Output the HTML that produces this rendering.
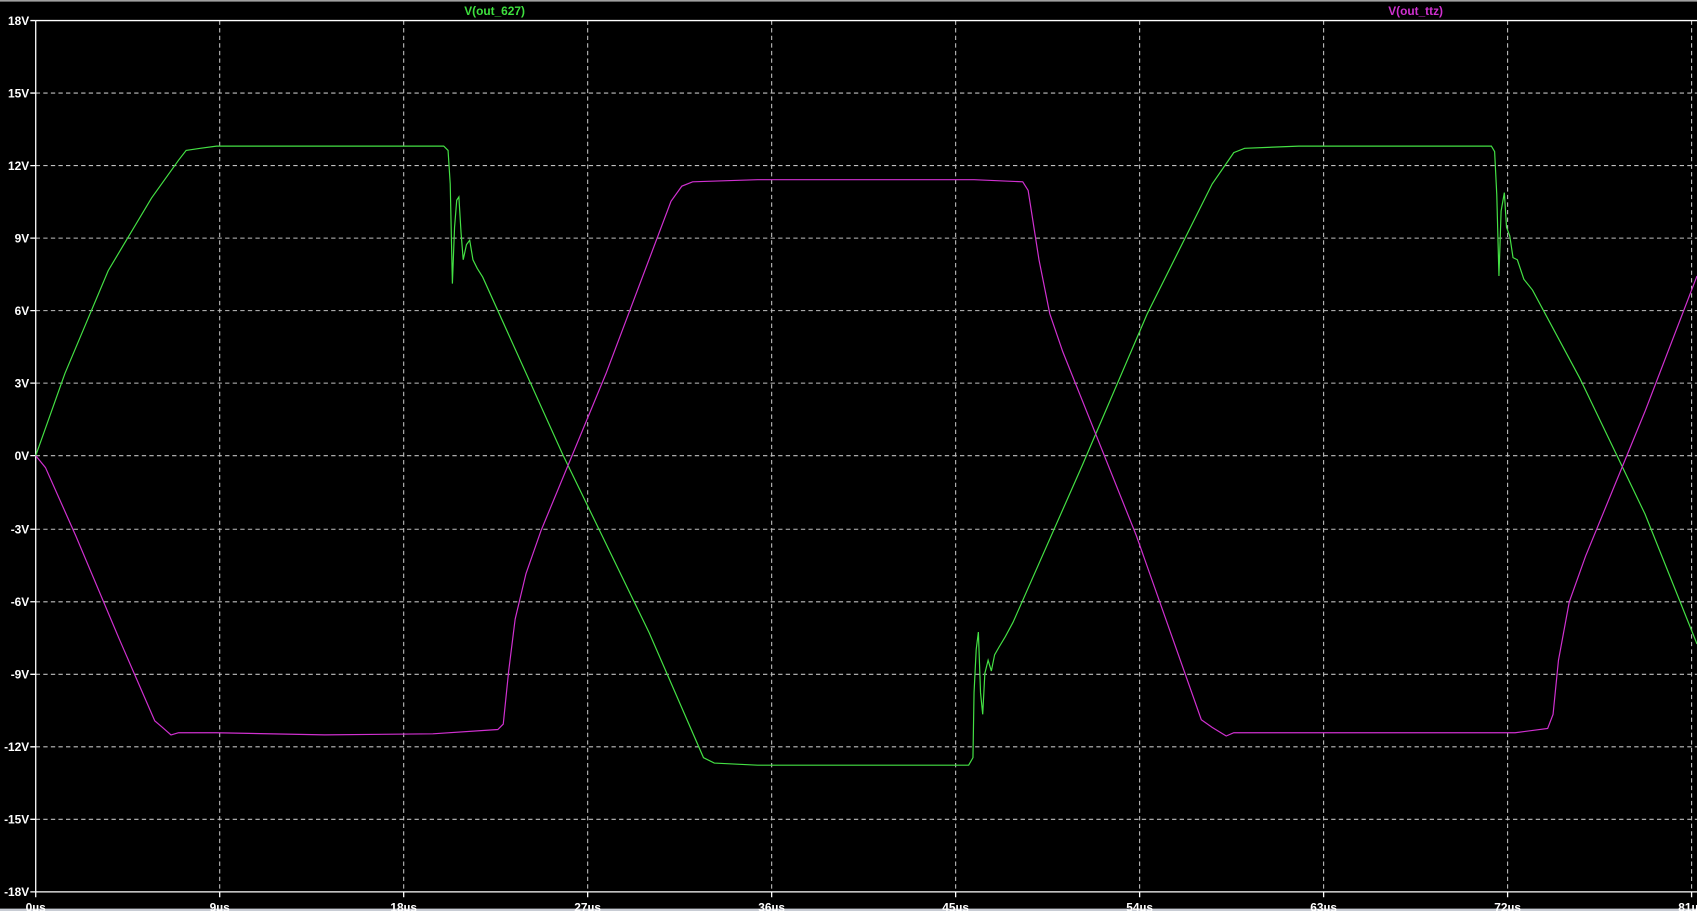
<!DOCTYPE html>
<html><head><meta charset="utf-8"><style>
html,body{margin:0;padding:0;background:#000;overflow:hidden}
svg{display:block}
text{font-family:"Liberation Sans",sans-serif;font-weight:bold;font-size:11px}
</style></head><body>
<svg width="1697" height="911" viewBox="0 0 1568 841.7" preserveAspectRatio="none">
<rect x="0" y="0" width="1568" height="842" fill="#000"/>
<rect x="0" y="0" width="1568" height="1.5" fill="#a0a0a0"/>
<rect x="0" y="839.5" width="1568" height="2.2" fill="#c8ccd4"/>
<g stroke="#c0c0c0" stroke-width="1" stroke-dasharray="4,3">
<line x1="203" y1="19" x2="203" y2="824"/><line x1="373" y1="19" x2="373" y2="824"/>
<line x1="543" y1="19" x2="543" y2="824"/><line x1="713" y1="19" x2="713" y2="824"/>
<line x1="883" y1="19" x2="883" y2="824"/><line x1="1053" y1="19" x2="1053" y2="824"/>
<line x1="1223" y1="19" x2="1223" y2="824"/><line x1="1393" y1="19" x2="1393" y2="824"/>
<line x1="1563" y1="19" x2="1563" y2="824"/>
<line x1="33" y1="86" x2="1568" y2="86"/><line x1="33" y1="153" x2="1568" y2="153"/>
<line x1="33" y1="220" x2="1568" y2="220"/><line x1="33" y1="287" x2="1568" y2="287"/>
<line x1="33" y1="354" x2="1568" y2="354"/><line x1="33" y1="421" x2="1568" y2="421"/>
<line x1="33" y1="489" x2="1568" y2="489"/><line x1="33" y1="556" x2="1568" y2="556"/>
<line x1="33" y1="623" x2="1568" y2="623"/><line x1="33" y1="690" x2="1568" y2="690"/>
<line x1="33" y1="757" x2="1568" y2="757"/>
</g>
<g stroke="#fff" stroke-width="1.2" fill="none">
<line x1="33" y1="19" x2="1568" y2="19"/>
<line x1="33" y1="19" x2="33" y2="824"/>
<line x1="33" y1="824" x2="1568" y2="824"/>
<path d="M28 19h5M28 86h5M28 153h5M28 220h5M28 287h5M28 354h5M28 421h5M28 489h5M28 556h5M28 623h5M28 690h5M28 757h5M28 824h5"/>
<path d="M33 824v5M203 824v5M373 824v5M543 824v5M713 824v5M883 824v5M1053 824v5M1223 824v5M1393 824v5M1563 824v5"/>
</g>
<g fill="#fff" text-anchor="end">
<text x="27" y="23">18V</text><text x="27" y="90">15V</text><text x="27" y="157">12V</text>
<text x="27" y="224">9V</text><text x="27" y="291">6V</text><text x="27" y="358">3V</text>
<text x="27" y="425">0V</text><text x="27" y="493">-3V</text><text x="27" y="560">-6V</text>
<text x="27" y="627">-9V</text><text x="27" y="694">-12V</text><text x="27" y="761">-15V</text>
<text x="27" y="828">-18V</text>
</g>
<g fill="#fff" text-anchor="middle">
<text x="33" y="842">0µs</text><text x="203" y="842">9µs</text><text x="373" y="842">18µs</text>
<text x="543" y="842">27µs</text><text x="713" y="842">36µs</text><text x="883" y="842">45µs</text>
<text x="1053" y="842">54µs</text><text x="1223" y="842">63µs</text><text x="1393" y="842">72µs</text>
<text x="1563" y="842">81µs</text>
</g>
<text x="457" y="14" fill="#3ee03e" text-anchor="middle">V(out_627)</text>
<text x="1308" y="14" fill="#d030d0" text-anchor="middle">V(out_ttz)</text>
<polyline fill="none" stroke="#44e044" stroke-width="1.1" points="33,421 60,345 100,250 140,183 165,148 172,139 185,137 200,135 410,135 414,139 416,170 418,262 420,210 422,185 424,182 426,215 428,240 431,226 434,222 437,240 441,248 446,256 520,420 600,585 650,700 660,705 700,707 895,707 899,700 900,640 902,600 904,584 906,640 908,660 910,622 913,610 916,620 919,605 923,598 929,588 936,575 1000,430 1060,290 1120,170 1140,141 1150,137 1200,135 1378,135 1381,140 1383,180 1385,255 1387,195 1390,178 1392,210 1395,218 1398,238 1402,240 1408,258 1416,268 1460,350 1520,475 1568,595"/>
<polyline fill="none" stroke="#d030d0" stroke-width="1.1" points="33,421 42,432 70,495 110,590 143,666 150,672 158,679 165,677 200,677 300,679 400,678 460,674 465,669 470,620 476,572 486,530 500,490 560,345 620,186 630,172 640,168 700,166 900,166 945,168 950,176 960,240 970,290 982,325 1050,495 1110,665 1120,672 1133,680 1140,677 1200,677 1400,677 1430,673 1435,660 1440,610 1450,556 1465,514 1520,380 1568,255"/>
</svg>
</body></html>
